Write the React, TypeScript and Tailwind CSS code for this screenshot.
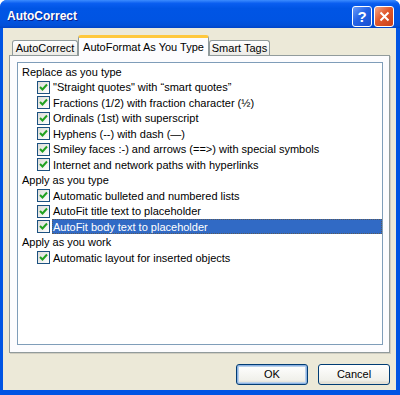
import React from "react";

type Row = { kind: "head"; text: string } | { kind: "item"; text: string; selected?: boolean };

const rows: Row[] = [
  { kind: "head", text: "Replace as you type" },
  { kind: "item", text: "\"Straight quotes\" with \u201csmart quotes\u201d" },
  { kind: "item", text: "Fractions (1/2) with fraction character (\u00bd)" },
  { kind: "item", text: "Ordinals (1st) with superscript" },
  { kind: "item", text: "Hyphens (--) with dash (\u2014)" },
  { kind: "item", text: "Smiley faces :-) and arrows (==>) with special symbols" },
  { kind: "item", text: "Internet and network paths with hyperlinks" },
  { kind: "head", text: "Apply as you type" },
  { kind: "item", text: "Automatic bulleted and numbered lists" },
  { kind: "item", text: "AutoFit title text to placeholder" },
  { kind: "item", text: "AutoFit body text to placeholder", selected: true },
  { kind: "head", text: "Apply as you work" },
  { kind: "item", text: "Automatic layout for inserted objects" },
];

function CheckBox() {
  return (
    <div className="w-[13px] h-[13px] border border-[#1c5180] bg-[linear-gradient(135deg,#dcdcd7,#ffffff)] flex items-center justify-center shrink-0">
      <svg width="9" height="9" viewBox="0 0 9 9">
        <path d="M1 4 L3.5 6.5 L8 1.5" fill="none" stroke="#21a121" strokeWidth="2" />
      </svg>
    </div>
  );
}

function Tab({ label, active, w }: { label: string; active?: boolean; w: string }) {
  if (active) {
    return (
      <div className={"relative h-[21px] -mb-[1px] bg-[#fcfcfe] border-x border-[#919b9c] rounded-t-[3px] border-t-[3px] border-t-[#ffc83c] flex items-center justify-center text-[11px] text-black z-10 " + w}>
        {label}
      </div>
    );
  }
  return (
    <div className={"h-[15px] bg-[linear-gradient(#ffffff,#ecebe6)] border border-b-0 border-[#919b9c] rounded-t-[3px] flex items-center justify-center text-[11px] text-black whitespace-nowrap " + w}>
      {label}
    </div>
  );
}

function XpButton({ label, def }: { label: string; def?: boolean }) {
  return (
    <div
      className={
        "w-[72px] h-[21px] rounded-[3px] border border-[#003c74] flex items-center justify-center text-[11px] text-black bg-[linear-gradient(#ffffff,#f0f0ea_80%,#d6d0c5)] " +
        (def ? "shadow-[inset_0_0_0_1px_#8db2e3,inset_0_0_0_2px_#b9d1ea]" : "shadow-[inset_0_-2px_0_#e3e0d6]")
      }
    >
      {label}
    </div>
  );
}

export default function App() {
  return (
    <div
      className="w-[400px] h-[395px] flex flex-col rounded-t-[7px] bg-[#0054e3] overflow-hidden"
      style={{ fontFamily: "Tahoma, 'Liberation Sans', Arial, sans-serif" }}
    >
      {/* title bar */}
      <div className="h-[28px] shrink-0 flex items-center pl-[7px] pr-[6px] bg-[linear-gradient(#3c8cff_0%,#0a5ef0_12%,#0055e5_30%,#0054e3_70%,#0250d8_90%,#0044c8_100%)]">
        <span className="text-white font-bold text-[12px] pt-[3px] [text-shadow:1px_1px_0_#0a1e8c] flex-1">
          AutoCorrect
        </span>
        <div className="flex gap-[2px] pt-[4px]">
          <div className="w-[20px] h-[21px] rounded-[3px] border border-white bg-[linear-gradient(135deg,#6b9df8,#2563e6_45%,#1a4fd0)] flex items-center justify-center text-white font-bold text-[15px] leading-none">
            ?
          </div>
          <div className="w-[20px] h-[21px] rounded-[3px] border border-white bg-[linear-gradient(135deg,#f2a98a,#e1582c_45%,#c8401a)] flex items-center justify-center">
            <svg width="11" height="11" viewBox="0 0 11 11">
              <path d="M1.5 1.5 L9.5 9.5 M9.5 1.5 L1.5 9.5" stroke="white" strokeWidth="2" />
            </svg>
          </div>
        </div>
      </div>

      {/* client */}
      <div className="flex-1 ml-[3px] mr-[4px] mb-[5px] bg-[#ece9d8] flex flex-col pl-[6px] pr-[6px] pt-[7px]">
        <div className="flex items-end pl-[3px]">
          <Tab label="AutoCorrect" w="w-[66px]" />
          <Tab label="AutoFormat As You Type" active w="w-[131px]" />
          <Tab label="Smart Tags" w="w-[61px]" />
        </div>
        <div className="h-[298px] border border-[#919b9c] bg-[#fcfcfe] shadow-[1px_1px_0_#d0cdc0] pt-[6px] pl-[7px] pr-[6px] pb-[7px] flex">
          <div className="flex-1 border border-[#7f9db9] bg-white pt-[1px]">
            {rows.map((r, i) =>
              r.kind === "head" ? (
                <div key={i} className="h-[15.5px] flex items-center pl-[4px] text-[11px] text-black whitespace-nowrap">
                  {r.text}
                </div>
              ) : (
                <div key={i} className="h-[15.5px] flex items-center pl-[19px] text-[11px] whitespace-nowrap">
                  <CheckBox />
                  <span
                    className={
                      "flex-1 ml-[2px] pl-[1px] h-[15px] flex items-center " +
                      (r.selected ? "bg-[#316ac5] text-white outline outline-1 outline-dotted outline-[#5a5a5a] -outline-offset-1" : "text-black")
                    }
                  >
                    {r.text}
                  </span>
                </div>
              )
            )}
          </div>
        </div>
        <div className="flex justify-end gap-[10px] mt-[11px]">
          <XpButton label="OK" def />
          <XpButton label="Cancel" />
        </div>
      </div>
    </div>
  );
}
